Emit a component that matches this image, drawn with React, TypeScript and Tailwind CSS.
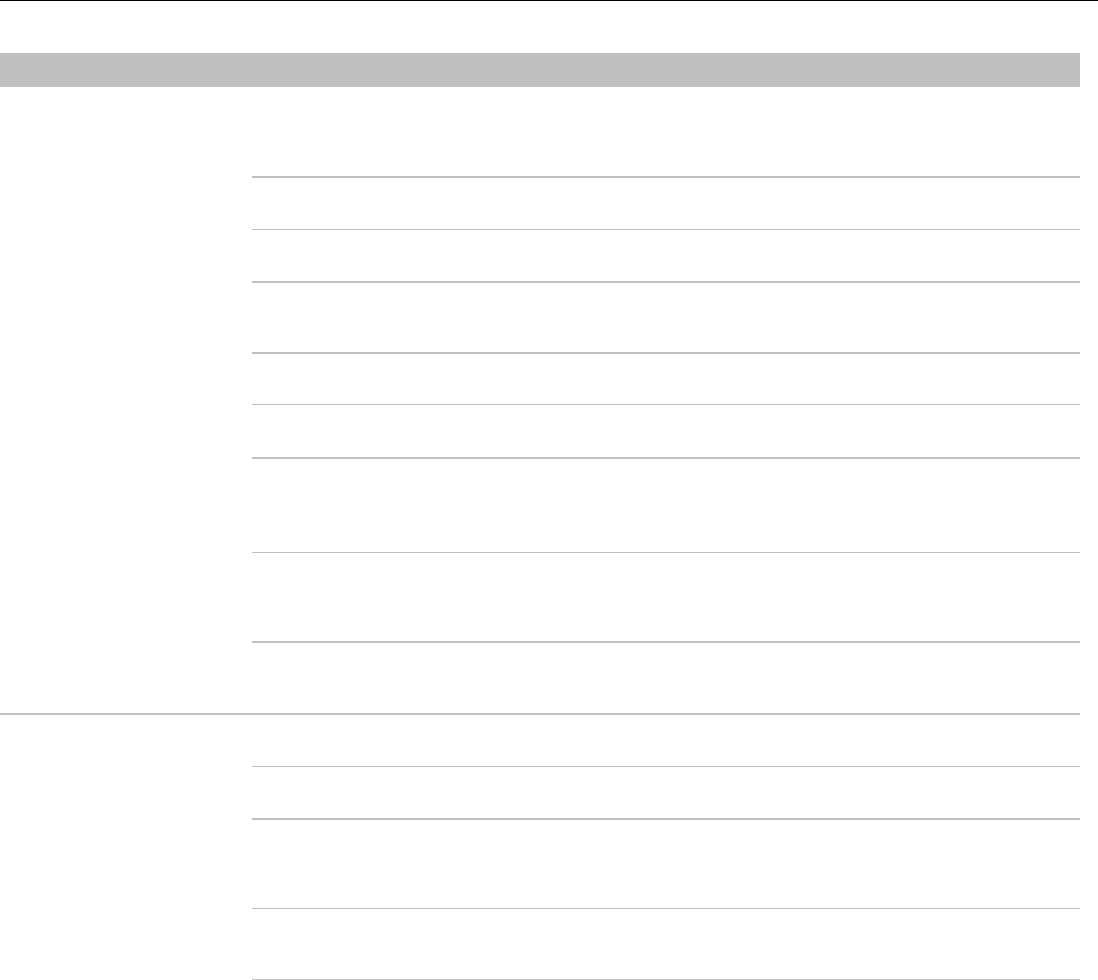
const groupOne = [
  { h: 'h-[91px]', b: 'border-b-2' },
  { h: 'h-[52px]', b: 'border-b' },
  { h: 'h-[53px]', b: 'border-b-2' },
  { h: 'h-[71px]', b: 'border-b-2' },
  { h: 'h-[51px]', b: 'border-b' },
  { h: 'h-[54px]', b: 'border-b-2' },
  { h: 'h-[94px]', b: 'border-b' },
  { h: 'h-[90px]', b: 'border-b-2' },
  { h: 'h-[70px]', b: '' },
];

const groupTwo = [
  { h: 'h-[52px]', b: 'border-b' },
  { h: 'h-[53px]', b: 'border-b-2' },
  { h: 'h-[89px]', b: 'border-b' },
  { h: 'h-[71px]', b: 'border-b' },
];

function Group({ rows, last }: { rows: { h: string; b: string }[]; last?: boolean }) {
  return (
    <div className={`flex ${last ? '' : 'border-b-2 border-[#bfbfbf]'}`}>
      <div className="w-[252px] shrink-0" />
      <div className="flex-1 flex flex-col">
        {rows.map((r, i) => (
          <div key={i} className={`${r.h} ${r.b} border-[#bfbfbf]`} />
        ))}
      </div>
    </div>
  );
}

export default function App() {
  return (
    <div className="min-h-[980px] bg-white border-t border-black font-['Liberation_Sans',Arial,sans-serif]">
      <div className="w-[1080px] pt-[52px]">
        {/* header bar */}
        <div className="h-[34px] bg-[#bfbfbf]" />
        <Group rows={groupOne} />
        <Group rows={groupTwo} last />
      </div>
    </div>
  );
}
